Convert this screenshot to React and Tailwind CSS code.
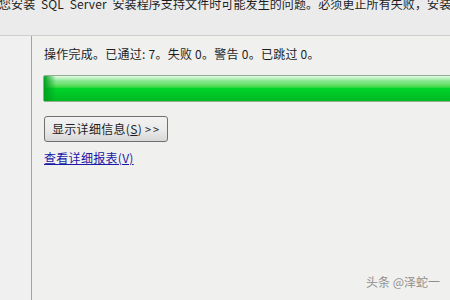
export default function App() {
  const font = { fontFamily: '"Noto Sans CJK SC", "Noto Sans", sans-serif' };
  return (
    <div className="w-[450px] h-[300px] bg-[#f0f0ef] flex flex-col overflow-hidden relative text-[#1e1e1e]" style={font}>
      <div className="h-[36px] shrink-0 bg-[#ebebeb] border-b border-[#cfcfcf] overflow-hidden">
        <div className="text-[12px] leading-[14px] whitespace-nowrap -mt-[3px] -ml-[1px] tracking-[0.1px] [word-spacing:3px]">
          您安装 SQL Server 安装程序支持文件时可能发生的问题。必须更正所有失败，安装程序才能继续。
        </div>
      </div>
      <div className="flex flex-1">
        <div className="w-[32px] shrink-0 border-r border-[#a3a3a3] bg-[#f0f0f0]"></div>
        <div className="flex-1 pl-[12px] pt-[10px] flex flex-col items-start">
          <div className="text-[12px] leading-[16px] whitespace-nowrap tracking-[0.25px]">
            操作完成。已通过: 7。失败 0。警告 0。已跳过 0。
          </div>
          <div className="mt-[13px] -ml-[1px] w-[420px] h-[27px] border border-[#8fb08f] rounded-[2px] bg-gradient-to-b from-[#c8f5cc] via-[#00d42a] to-[#00b822] relative overflow-hidden">
            <div className="absolute inset-x-0 top-0 h-[6px] bg-gradient-to-b from-[#e4f9e6] to-[#6fe47e]"></div>
            <div className="absolute left-0 top-0 bottom-0 w-[12px] bg-gradient-to-r from-[#00a020] to-transparent"></div>
          </div>
          <button className="mt-[14px] h-[26px] w-[124px] pl-[7px] text-left border border-[#707070] rounded-[3px] bg-gradient-to-b from-[#f2f2f2] via-[#ebebeb] to-[#d8d8d8] text-[12px] leading-[16px] text-[#1e1e1e] whitespace-nowrap tracking-[0.3px]" style={font}>
            显示详细信息(<span className="underline">S</span>) <span className="tracking-[2px] text-[11px]">&gt;&gt;</span>
          </button>
          <a className="mt-[8px] text-[12px] leading-[16px] text-[#1a1aa6] underline whitespace-nowrap tracking-[0.3px]">
            查看详细报表(V)
          </a>
        </div>
      </div>
      <div className="absolute right-[10px] bottom-[9px] text-[12px] text-[#909090]">头条 @泽蛇一</div>
    </div>
  );
}
